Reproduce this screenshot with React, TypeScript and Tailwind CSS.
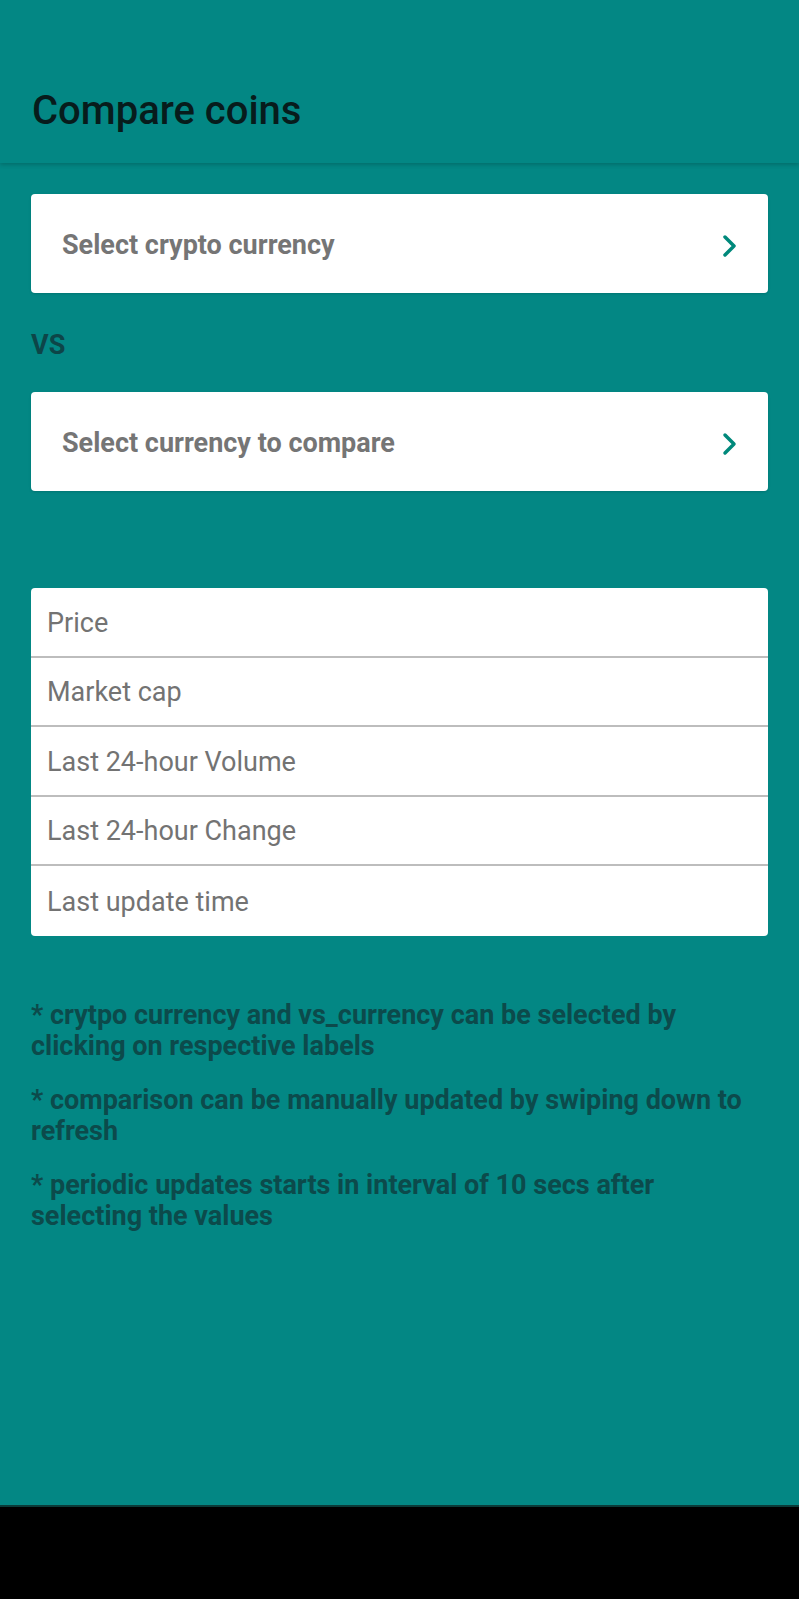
import React from "react";

const Chevron = () => (
  <svg width="16" height="24" viewBox="0 0 16 24" fill="none">
    <path d="M3 3 L12 12 L3 21" stroke="#00897b" strokeWidth="3.5" strokeLinecap="round" strokeLinejoin="round" />
  </svg>
);

const SelectCard = ({ label }: { label: string }) => (
  <div className="flex h-[99px] items-center justify-between rounded-[4px] bg-white pl-[31px] pr-[30px] pt-[4px] shadow-sm">
    <span className="text-[27px] font-bold leading-[27px] text-[#757575]">{label}</span>
    <Chevron />
  </div>
);

const rows = ["Price", "Market cap", "Last 24-hour Volume", "Last 24-hour Change", "Last update time"];

const notes = [
  "* crytpo currency and vs_currency can be selected by clicking on respective labels",
  "* comparison can be manually updated by swiping down to refresh",
  "* periodic updates starts in interval of 10 secs after selecting the values",
];

export default function App() {
  return (
    <div className="flex min-h-[1599px] w-full flex-col bg-black font-['Roboto',sans-serif]">
      <div className="flex h-[1505px] flex-col bg-[#038784]">
        <header className="relative h-[163px] px-[32px] pt-[91px] shadow-[0_2px_4px_rgba(0,0,0,0.18)]">
          <h1 className="text-[40px] font-medium leading-[40px] text-[#071c1c]">Compare coins</h1>
        </header>

        <main className="flex flex-col px-[31px] pt-[31px]">
          <SelectCard label="Select crypto currency" />
          <div className="mt-[39px] mb-[33px] text-[27px] font-bold leading-[27px] text-[#0d4548]">VS</div>
          <SelectCard label="Select currency to compare" />

          <div className="mt-[97px] flex flex-col overflow-hidden rounded-[4px] bg-white">
            {rows.map((r, i) => (
              <div
                key={r}
                className={
                  "flex h-[69.5px] items-center pl-[16px] pt-[3px] text-[27px] leading-[27px] text-[#737373]" +
                  (i < rows.length - 1 ? " border-b-2 border-[#bdbdbd]" : "")
                }
              >
                {r}
              </div>
            ))}
          </div>

          <div className="mt-[64px] flex flex-col gap-[23px]">
            {notes.map((n) => (
              <p key={n} className="text-[27px] font-bold leading-[31px] text-[#0c4a4b]">
                {n}
              </p>
            ))}
          </div>
        </main>
      </div>
      <div className="h-[94px] border-t-2 border-[#0a3a38] bg-black" />
    </div>
  );
}
